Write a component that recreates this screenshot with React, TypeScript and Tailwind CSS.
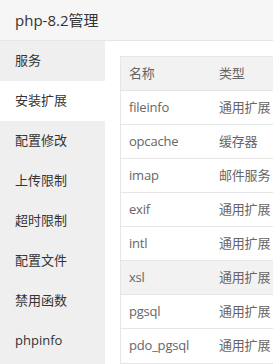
import React from 'react';

const menu = ['服务', '安装扩展', '配置修改', '上传限制', '超时限制', '配置文件', '禁用函数', 'phpinfo'];

const rows = [
  ['fileinfo', '通用扩展'],
  ['opcache', '缓存器'],
  ['imap', '邮件服务'],
  ['exif', '通用扩展'],
  ['intl', '通用扩展'],
  ['xsl', '通用扩展'],
  ['pgsql', '通用扩展'],
  ['pdo_pgsql', '通用扩展'],
];

const App = () => {
  return (
    <div className="w-[273px] h-[364px] overflow-hidden bg-white" style={{ fontFamily: '"Open Sans", "Noto Sans CJK SC", sans-serif' }}>
      {/* Title bar */}
      <div className="h-[41px] bg-[#f6f6f6] border-b border-[#e6e6e6] pl-[15px] flex items-center text-[15px] text-[#333]">
        php-8.2管理
      </div>

      <div className="flex">
        {/* Side menu */}
        <div className="w-[105px] shrink-0 bg-[#efefef] h-[323px]">
          {menu.map((m, i) => (
            <div
              key={m}
              className={`h-[40px] pl-[15px] flex items-center text-[13px] text-[#333] ${i === 1 ? 'bg-white' : ''}`}
            >
              {m}
            </div>
          ))}
        </div>

        {/* Extension table */}
        <div className="flex-1 pl-[15px] pt-[15px]">
          <div className="border border-[#e6e6e6] border-r-0 text-[13px] text-[#666] tracking-[-0.2px]">
            <div className="flex h-[34px] items-center bg-[#f2f2f2] border-b border-[#e6e6e6]">
              <div className="w-[98px] pl-[8px] shrink-0">名称</div>
              <div>类型</div>
            </div>
            {rows.map(([name, type], i) => (
              <div
                key={name}
                className={`flex h-[34px] items-center whitespace-nowrap ${i < rows.length - 1 ? 'border-b border-[#e6e6e6]' : ''} ${name === 'xsl' ? 'bg-[#f2f2f2]' : ''}`}
              >
                <div className="w-[98px] pl-[8px] shrink-0">{name}</div>
                <div>{type}</div>
              </div>
            ))}
          </div>
        </div>
      </div>
    </div>
  );
};

export default App;
